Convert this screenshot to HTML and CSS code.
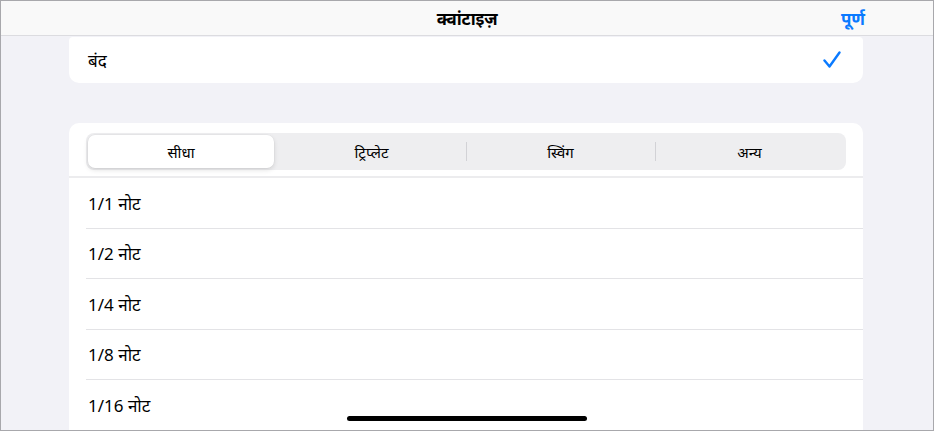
FILE: index.html
```html
<!DOCTYPE html>
<html lang="hi">
<head>
<meta charset="utf-8">
<link rel="stylesheet" href="styles.css">
</head>
<body>
<div class="frame">
  <header class="navbar">
    <div class="nav-title">क्वांटाइज़</div>
    <div class="nav-done">पूर्ण</div>
  </header>
  <main class="content">
    <section class="card card-top">
      <div class="option-row">
        <span class="label">बंद</span>
        <svg class="check" width="18" height="18" viewBox="0 0 18 18"><path d="M1.5 9.5 L6.5 15.5 L16.5 1.5" fill="none" stroke="#0a7aff" stroke-width="2.4" stroke-linecap="round" stroke-linejoin="round"/></svg>
      </div>
    </section>
    <section class="card card-list">
      <div class="seg-wrap">
        <div class="segmented">
          <div class="seg seg-active">सीधा</div>
          <div class="seg">ट्रिप्लेट</div>
          <div class="seg seg-div">स्विंग</div>
          <div class="seg seg-div">अन्य</div>
        </div>
      </div>
      <div class="row"><span class="label">1/1 नोट</span></div>
      <div class="row"><span class="label">1/2 नोट</span></div>
      <div class="row"><span class="label">1/4 नोट</span></div>
      <div class="row"><span class="label">1/8 नोट</span></div>
      <div class="row"><span class="label">1/16 नोट</span></div>
    </section>
  </main>
  <div class="home-indicator"></div>
</div>
</body>
</html>
```
FILE: styles.css
```css
* { box-sizing: border-box; }
html, body { margin: 0; padding: 0; }
body {
  font-family: "Noto Sans", "Noto Sans Devanagari", "Lohit Devanagari", "Liberation Sans", sans-serif;
  color: #000;
}
.frame {
  width: 934px;
  height: 431px;
  border: 1px solid #a8a8ac;
  background: #f2f2f7;
  position: relative;
  overflow: hidden;
  display: flex;
  flex-direction: column;
}
.navbar {
  height: 35px;
  flex: none;
  background: #f9f9f9;
  border-bottom: 1px solid #dcdce0;
  display: flex;
  align-items: center;
  justify-content: center;
  position: relative;
  z-index: 2;
}
.nav-title {
  font-size: 17px;
  font-weight: 700;
  letter-spacing: -0.2px;
}
.nav-done {
  position: absolute;
  right: 68px;
  top: 50%;
  transform: translateY(-50%);
  font-size: 17px;
  font-weight: 700;
  color: #0a7aff;
}
.content {
  padding: 0 70px 0 68px;
  display: flex;
  flex-direction: column;
  gap: 40px;
  flex: 1;
}
.card {
  background: #fff;
  border-radius: 10px;
}
.card-top {
  margin-top: 1px;
  border-radius: 4px 4px 10px 10px;
}
.option-row {
  height: 46px;
  padding: 0 22px 0 19px;
  display: flex;
  align-items: center;
  justify-content: space-between;
}
.label {
  font-size: 17px;
}
.check { display: block; }
.card-list {
  flex: 1;
  border-radius: 10px 10px 0 0;
}
.seg-wrap {
  padding: 10px 17px 6px 17px;
  border-bottom: 2px solid #ececee;
}
.segmented {
  height: 37px;
  background: #eeeef0;
  border-radius: 8px;
  display: grid;
  grid-template-columns: repeat(4, 1fr);
  padding: 2px;
  position: relative;
}
.seg {
  display: flex;
  align-items: center;
  justify-content: center;
  font-size: 15px;
  position: relative;
}
.seg-active {
  background: #fff;
  border-radius: 7px;
  margin-right: 3px;
  box-shadow: 0 2px 5px rgba(0,0,0,0.12), 0 0 0 0.5px rgba(0,0,0,0.04);
}
.seg-div::before {
  content: "";
  position: absolute;
  left: 0;
  top: 7px;
  bottom: 7px;
  width: 1px;
  background: #d2d2d6;
}
.row {
  height: 50.5px;
  padding-left: 19px;
  display: flex;
  align-items: center;
  position: relative;
}
.row::after {
  content: "";
  position: absolute;
  left: 17px;
  right: 0;
  bottom: 0;
  height: 1px;
  background: #e3e3e6;
}
.home-indicator {
  position: absolute;
  left: 346px;
  top: 415px;
  width: 240px;
  height: 5px;
  border-radius: 3px;
  background: #000;
}
```
